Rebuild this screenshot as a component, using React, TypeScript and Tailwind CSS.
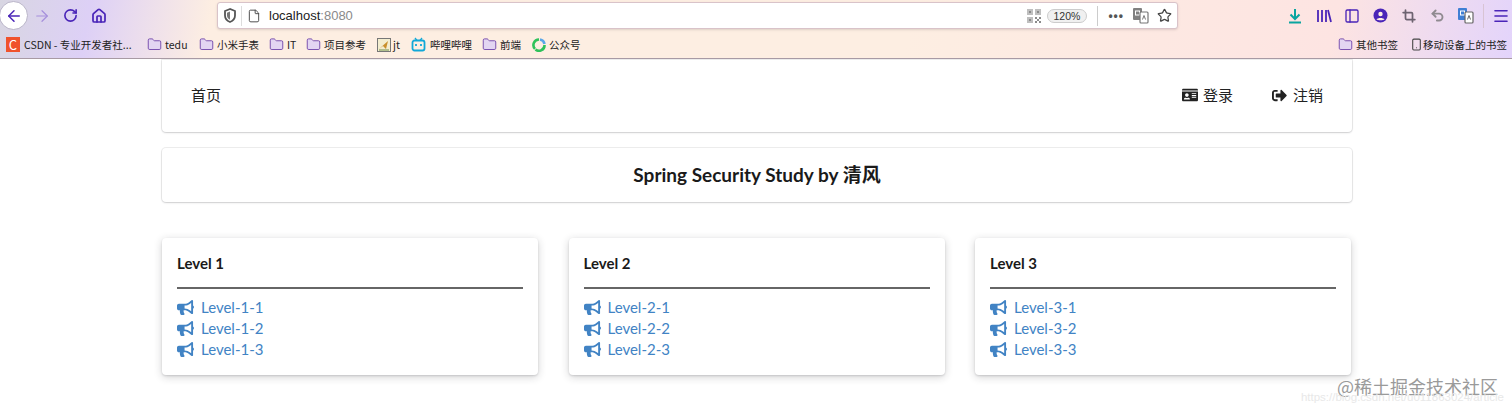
import { FaBullhorn, FaIdCard, FaSignOutAlt } from "react-icons/fa";
import { ArrowLeft, ArrowRight, RotateCw, Home, File, Star, PanelLeft, Crop, Undo2, Menu, Folder, Smartphone } from "lucide-react";

const cjk = "font-['Noto_Sans_CJK_SC','Liberation_Sans',sans-serif]";
const lato = "font-['Lato','Noto_Sans_CJK_SC',sans-serif]";

const levels = [
  { title: "Level 1", items: ["Level-1-1", "Level-1-2", "Level-1-3"] },
  { title: "Level 2", items: ["Level-2-1", "Level-2-2", "Level-2-3"] },
  { title: "Level 3", items: ["Level-3-1", "Level-3-2", "Level-3-3"] },
];

function FolderMark() {
  return <Folder size={15} strokeWidth={1.4} className="shrink-0 text-[#6b3fa8] fill-[#e3d5f2]" />;
}

function TranslateIcon({ back, front }: { back: string; front: string }) {
  return (
    <svg width="17" height="17" viewBox="0 0 17 17" className="shrink-0">
      <rect x="1" y="1" width="9" height="12" rx="1" fill={back} />
      <rect x="3.5" y="4" width="4" height="4" fill="none" stroke="#fff" strokeWidth="1" />
      <rect x="8" y="5" width="8" height="11" rx="1" fill="#fff" stroke={front} strokeWidth="1.2" />
      <path d="M10.5 12.5 12 8.5l1.5 4" fill="none" stroke={front} strokeWidth="1" />
    </svg>
  );
}

function QrMark() {
  return (
    <svg width="14" height="14" viewBox="0 0 14 14" fill="#8b8b8b" className="shrink-0">
      <path d="M0 0h6v6H0zM8 0h6v6H8zM0 8h6v6H0z" opacity=".55" />
      <path d="M2 2h2v2H2zM10 2h2v2h-2zM2 10h2v2H2zM8 8h2v2H8zM12 8h2v2h-2zM10 10h2v2h-2zM8 12h2v2H8zM12 12h2v2h-2z" />
    </svg>
  );
}

function Toolbar() {
  return (
    <div className="flex h-[31px] items-center">
      <div className="ml-[-1px] flex h-[29px] w-[29px] items-center justify-center rounded-full border border-[#b9b4c8] bg-white">
        <ArrowLeft size={18} strokeWidth={2} className="text-[#4a25b8]" />
      </div>
      <ArrowRight size={18} strokeWidth={1.6} className="ml-[5px] text-[#a58fdc]" />
      <RotateCw size={15} strokeWidth={2.6} className="ml-[12px] text-[#4a25b8]" />
      <Home size={16} strokeWidth={2.6} className="ml-[13px] text-[#4a25b8]" />
      <div className="ml-[110px] flex h-[27px] w-[961px] items-center rounded-[3px] border border-[#d9c3c9] bg-white shadow-sm">
        <svg width="14" height="15" viewBox="0 0 14 15" className="ml-[5px] shrink-0">
          <path d="M7 1 2 3v4.5C2 11 4.5 13 7 14c2.500-1 5-3 5-6.500V3z" fill="none" stroke="#555" strokeWidth="1.800" />
          <path d="M7 3.500 4 4.700v3c0 2 1.500 3.300 3 4z" fill="#777" />
        </svg>
        <div className="ml-[4px] h-[20px] w-px bg-[#ddd]" />
        <File size={14} strokeWidth={1.6} className="ml-[5px] text-[#444]" />
        <span className="ml-[8px] font-['Liberation_Sans',sans-serif] text-[13px] text-[#222]">
          localhost<span className="text-[#8a8a8a]">:8080</span>
        </span>
        <div className="flex-1" />
        <QrMark />
        <span className="ml-[6px] rounded-full border border-[#ccc] bg-[#f0f0f0] px-[6px] font-['Liberation_Sans',sans-serif] text-[10.5px] leading-[12px] text-[#333]">
          120%
        </span>
        <div className="ml-[10px] h-[20px] w-px bg-[#ccc]" />
        <span className="ml-[10px] font-['Liberation_Sans',sans-serif] text-[12px] font-bold leading-none tracking-[1px] text-[#555]">•••</span>
        <div className="ml-[8px]">
          <TranslateIcon back="#808080" front="#777" />
        </div>
        <Star size={15} strokeWidth={2} className="ml-[8px] mr-[5px] text-[#444]" />
      </div>
      <svg width="16" height="16" viewBox="0 0 16 16" className="ml-[109px] shrink-0" fill="none" stroke="#0aa5a0" strokeWidth="2">
        <path d="M8 1v9M3.500 6.500 8 11l4.500-4.500M2 14.500h12" />
      </svg>
      <svg width="16" height="16" viewBox="0 0 16 16" className="ml-[13px] shrink-0" fill="none" stroke="#4a25b8" strokeWidth="1.800">
        <path d="M2 2v12M6 2v12M10 2v12M12 2l3 12" />
      </svg>
      <PanelLeft size={16} strokeWidth={2} className="ml-[12px] text-[#4a25b8]" />
      <svg width="15" height="15" viewBox="0 0 15 15" className="ml-[13px] shrink-0">
        <circle cx="7.500" cy="7.500" r="7" fill="#4a25b8" />
        <circle cx="7.500" cy="6" r="2.200" fill="#fdeee2" />
        <path d="M3.500 11.500c1-2 7-2 8 0-1 1-7 1-8 0z" fill="#fdeee2" />
      </svg>
      <Crop size={14} strokeWidth={3} className="ml-[14px] text-[#6d6370]" />
      <Undo2 size={15} strokeWidth={3} className="ml-[14px] text-[#8f8a90]" />
      <div className="ml-[12px]">
        <TranslateIcon back="#3f7fd4" front="#666" />
      </div>
      <div className="ml-[9px] h-[24px] w-px bg-[#d8c4d4]" />
      <Menu size={18} strokeWidth={2.2} className="ml-[8px] text-[#4a25b8]" />
    </div>
  );
}

function BookmarksBar() {
  return (
    <div className={`flex h-[27px] items-center text-[10.5px] text-[#222] ${cjk}`}>
      <span className="ml-[6px] flex h-[15px] w-[14px] shrink-0 items-center justify-center bg-[#f0522b] text-[13px] leading-none text-white">C</span>
      <span className="ml-[4px] w-[123px] shrink-0 truncate">CSDN - 专业开发者社...</span>
      <span className="flex w-[52px] items-center gap-[3px]"><FolderMark />tedu</span>
      <span className="flex w-[70px] items-center gap-[3px]"><FolderMark />小米手表</span>
      <span className="flex w-[37px] items-center gap-[3px]"><FolderMark />IT</span>
      <span className="flex w-[71px] items-center gap-[3px]"><FolderMark />项目参考</span>
      <span className="flex w-[34px] items-center gap-[2px]">
        <svg width="14" height="14" viewBox="0 0 14 14" className="shrink-0">
          <rect x=".5" y=".5" width="13" height="13" fill="#f3edcf" stroke="#777" />
          <path d="M2 11 11 3l-2 8-3-3z" fill="#c9902c" />
          <path d="M2 12h10" stroke="#6f8f4a" />
        </svg>
        jt
      </span>
      <span className="flex w-[71px] items-center gap-[4px]">
        <svg width="15" height="15" viewBox="0 0 15 15" className="shrink-0" fill="none" stroke="#12a8d8" strokeWidth="1.800">
          <rect x="1.500" y="3.500" width="12" height="10" rx="2" />
          <path d="M4 1l2 2.500M11 1 9 3.500" strokeWidth="1.300" />
          <path d="M5 7v2M10 7v2" />
        </svg>
        哔哩哔哩
      </span>
      <span className="flex w-[50px] items-center gap-[3px]"><FolderMark />前端</span>
      <span className="flex items-center gap-[3px]">
        <svg width="14" height="14" viewBox="0 0 14 14" className="shrink-0" fill="none" strokeWidth="2.600">
          <path d="M7 1.500a5.500 5.500 0 0 0-4 9.300" stroke="#2fc25b" />
          <path d="M3.500 11.500A5.500 5.500 0 0 0 12.500 7" stroke="#2fc25b" />
          <path d="M12.500 6A5.500 5.500 0 0 0 8 1.500" stroke="#58a6e8" />
        </svg>
        公众号
      </span>
      <div className="flex-1" />
      <span className="flex items-center gap-[3px]"><FolderMark />其他书签</span>
      <span className="ml-[12px] mr-[5px] flex items-center">
        <Smartphone size={13} className="text-[#444]" />
        移动设备上的书签
      </span>
    </div>
  );
}

function LevelCard({ title, items }: { title: string; items: string[] }) {
  return (
    <div className="h-[137px] rounded-[4px] bg-white px-[15px] pt-[15px] shadow-[0_1px_2px_rgba(34,36,38,0.15),0_2px_8px_rgba(34,36,38,0.2)]">
      <h3 className="text-[15px] font-bold leading-[20px] text-[#1a1a1a]">{title}</h3>
      <div className="mt-[14px] h-[2px] bg-[#666]" />
      <ul className="mt-[8px]">
        {items.map((item) => (
          <li key={item} className="flex h-[21px] items-center text-[15px] text-[#4183c4]">
            <FaBullhorn size={17} className="mr-[7px] shrink-0" />
            {item}
          </li>
        ))}
      </ul>
    </div>
  );
}

export default function App() {
  return (
    <div className={`relative h-[411px] w-[1512px] overflow-hidden bg-white ${lato}`}>
      <div className="h-[59px] border-b border-[#a89aa4] bg-[linear-gradient(100deg,#d8d6e2_0%,#ddd0f6_6%,#fdeee2_14%,#fdeee2_60%,#fde4e2_88%,#e3d4fb_100%)]">
        <Toolbar />
        <BookmarksBar />
      </div>

      <div className="ml-[162px] mt-px w-[1190px]">
        <div className="flex h-[72px] items-center rounded-b-[4px] bg-white px-[29px] pb-[2px] shadow-[0_1px_2px_rgba(34,36,38,0.15),0_0_0_1px_rgba(34,36,38,0.08)]">
          <span className={`text-[15px] text-[#222] ${cjk}`}>首页</span>
          <div className="flex-1" />
          <span className={`flex items-center text-[15px] text-[#222] ${cjk}`}>
            <FaIdCard size={16} className="mr-[5px]" />
            登录
          </span>
          <span className={`ml-[39px] flex items-center text-[15px] text-[#222] ${cjk}`}>
            <FaSignOutAlt size={15} className="mr-[6px]" />
            注销
          </span>
        </div>

        <div className="mt-[16px] flex h-[54px] items-center justify-center rounded-[4px] bg-white text-[19px] font-bold text-[#1a1a1a] shadow-[0_1px_2px_rgba(34,36,38,0.15),0_0_0_1px_rgba(34,36,38,0.08)]">
          Spring Security Study by 清风
        </div>

        <div className="mt-[36px] grid grid-cols-[repeat(3,376px)] gap-x-[30.5px]">
          {levels.map((level) => (
            <LevelCard key={level.title} title={level.title} items={level.items} />
          ))}
        </div>
      </div>

      <div className={`absolute right-[14px] top-[377px] text-right text-[18px] leading-[18px] text-[#9a9a9a] ${cjk}`}>
        @稀土掘金技术社区
      </div>
      <div className="absolute right-[8px] top-[392px] font-['Liberation_Sans',sans-serif] text-[11.5px] leading-[11px] text-[#e8e8e8]">
        https://blog.csdn.net/u011863024/article
      </div>
    </div>
  );
}
